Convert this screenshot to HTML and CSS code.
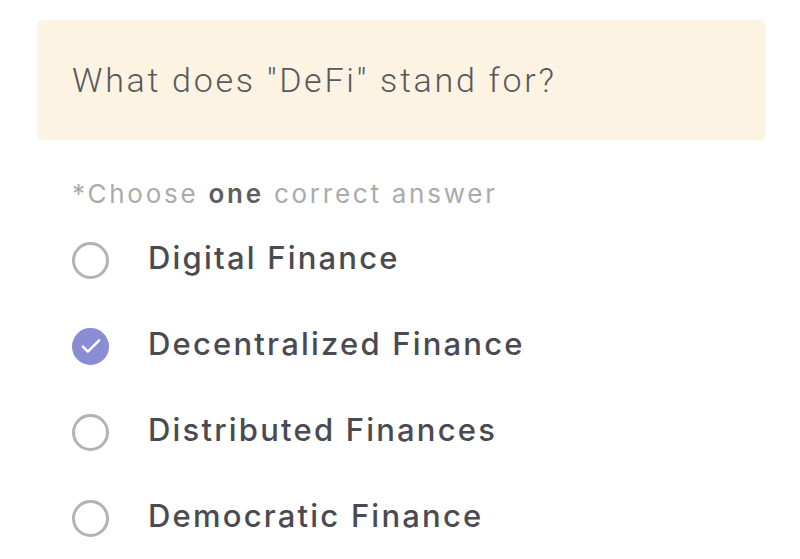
FILE: index.html
```html
<!DOCTYPE html>
<html lang="en">

<head>
  <meta charset="UTF-8">
  <meta name="viewport" content="width=device-width, initial-scale=1.0">
  <title>Quiz</title>
  <link rel="stylesheet" href="styles.css">
</head>

<body>
  <div class="quiz">
    <div class="question">What does "DeFi" stand for?</div>

    <p class="hint">*Choose <b>one</b> correct answer</p>

    <ul class="options">
      <li class="option">
        <span class="radio"></span>
        <span class="label">Digital Finance</span>
      </li>
      <li class="option checked">
        <span class="radio">
          <svg viewBox="0 0 24 24" width="30" height="30">
            <path d="M5.5 12.5l4 4L18.5 7.5" fill="none" stroke="#fff" stroke-width="2" stroke-linecap="round" stroke-linejoin="round" />
          </svg>
        </span>
        <span class="label">Decentralized Finance</span>
      </li>
      <li class="option">
        <span class="radio"></span>
        <span class="label">Distributed Finances</span>
      </li>
      <li class="option">
        <span class="radio"></span>
        <span class="label">Democratic Finance</span>
      </li>
    </ul>
  </div>
</body>

</html>
```

FILE: styles.css
```css
* {
  margin: 0;
  padding: 0;
  box-sizing: border-box;
}

body {
  background: #fff;
  font-family: Inter, "Noto Sans", sans-serif;
}

.quiz {
  padding: 20px 35px 0 37px;
}

.question {
  height: 120px;
  background: #fdf3e2;
  border-radius: 6px;
  padding: 0 0 0 35px;
  display: flex;
  align-items: center;
  font-family: Roboto, sans-serif;
  font-weight: 300;
  font-size: 34px;
  letter-spacing: 2.7px;
  color: #58585c;
}

.hint {
  margin: 39px 0 0 35px;
  font-size: 26px;
  line-height: 30px;
  letter-spacing: 2.75px;
  color: #ababab;
}

.hint b {
  font-weight: 600;
  color: #5e5e62;
}

.options {
  list-style: none;
  margin-top: 8px;
}

.option {
  display: flex;
  align-items: center;
  height: 86px;
}

.radio {
  width: 37px;
  height: 37px;
  margin-left: 35px;
  border: 3px solid #b3b3b3;
  border-radius: 50%;
  display: flex;
  align-items: center;
  justify-content: center;
}

.option.checked .radio {
  background: #8b8dd4;
  border-color: #8b8dd4;
}

.label {
  margin: 0 0 6px 39px;
  font-size: 31px;
  font-weight: 500;
  letter-spacing: 2.2px;
  color: #4a4a52;
}
```
